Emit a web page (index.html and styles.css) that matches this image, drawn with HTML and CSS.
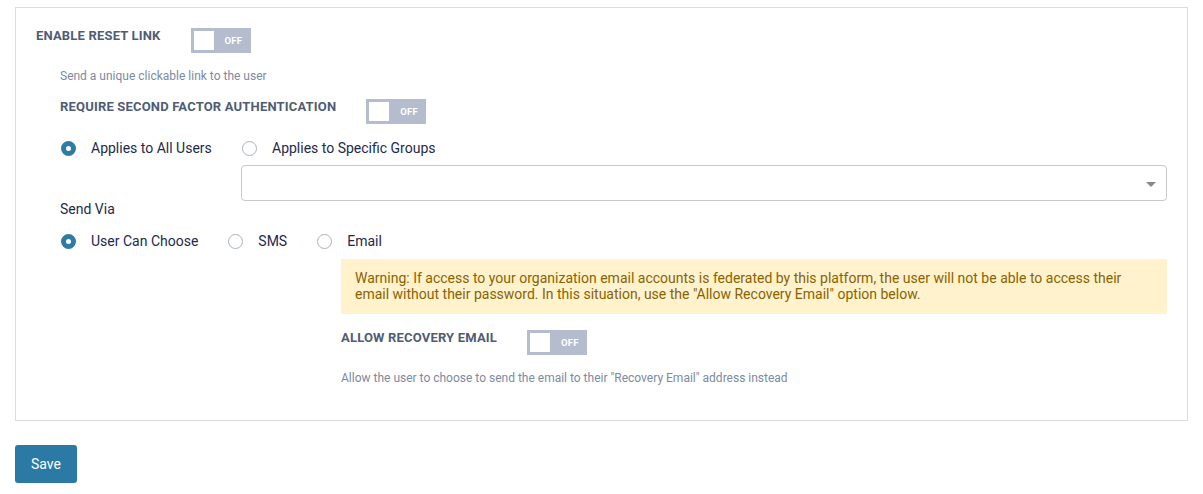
FILE: index.html
```html
<!DOCTYPE html>
<html lang="en">
<head>
<meta charset="utf-8">
<title>Reset settings</title>
<link rel="stylesheet" href="styles.css">
</head>
<body>
<div class="card">
  <div class="toggle-row">
    <span class="label">ENABLE RESET LINK</span>
    <span class="toggle"><span class="knob"></span><span class="off">OFF</span></span>
  </div>
  <div class="inner">
    <p class="desc">Send a unique clickable link to the user</p>
    <div class="toggle-row row2">
      <span class="label">REQUIRE SECOND FACTOR AUTHENTICATION</span>
      <span class="toggle"><span class="knob"></span><span class="off">OFF</span></span>
    </div>
    <div class="apply-grid">
      <label class="radio"><span class="dot on"></span>Applies to All Users</label>
      <label class="radio"><span class="dot"></span>Applies to Specific Groups</label>
      <span></span>
      <div class="select"><span class="caret"></span></div>
    </div>
    <div class="send-via">Send Via</div>
    <div class="radio-row">
      <label class="radio"><span class="dot on"></span>User Can Choose</label>
      <label class="radio"><span class="dot"></span>SMS</label>
      <label class="radio"><span class="dot"></span>Email</label>
    </div>
    <div class="email-block">
      <div class="warning">Warning: If access to your organization email accounts is federated by this platform, the user will not be able to access their email without their password. In this situation, use the "Allow Recovery Email" option below.</div>
      <div class="toggle-row row3">
        <span class="label">ALLOW RECOVERY EMAIL</span>
        <span class="toggle"><span class="knob"></span><span class="off">OFF</span></span>
      </div>
      <p class="desc">Allow the user to choose to send the email to their "Recovery Email" address instead</p>
    </div>
  </div>
</div>
<button class="save">Save</button>
</body>
</html>
```

FILE: styles.css
```css
* { box-sizing: border-box; }
body {
  margin: 0;
  padding: 7px 15px 0 15px;
  font-family: Roboto, "Liberation Sans", Arial, sans-serif;
  background: #fff;
  color: #1d2a4d;
}
.card {
  border: 1px solid #dcdcdc;
  padding: 20px 20px 34px 20px;
}
.toggle-row {
  display: flex;
  align-items: flex-start;
}
.label {
  font-size: 13px;
  font-weight: 700;
  line-height: 16px;
  letter-spacing: 0.18px;
  color: #4f5c74;
  margin-right: 30px;
}
.toggle {
  width: 60px;
  height: 25px;
  background: #b4bccd;
  display: flex;
  align-items: center;
  padding: 0 3px;
}
.knob {
  width: 20px;
  height: 19px;
  background: #fff;
}
.off {
  font-size: 9.5px;
  font-weight: 700;
  color: #fff;
  margin-left: 11px;
  letter-spacing: 0.2px;
}
.inner {
  padding-left: 24px;
}
.desc {
  margin: 15px 0 0 0;
  font-size: 12px;
  line-height: 16px;
  color: #7d8aa3;
}
.row2 {
  margin-top: 15px;
}
.apply-grid {
  margin-top: 14px;
  display: grid;
  grid-template-columns: 181px 1fr;
  row-gap: 7px;
}
.radio {
  display: flex;
  align-items: center;
  font-size: 14px;
  line-height: 20px;
  color: #1d2a4d;
}
.dot {
  width: 15px;
  height: 15px;
  border-radius: 50%;
  border: 1px solid #a9b1c2;
  margin: 0 15px 0 1px;
  flex-shrink: 0;
}
.dot.on {
  border: 5px solid #2e7ca6;
  background: #fff;
}
.select {
  height: 36px;
  border: 1px solid #c9c9c9;
  border-radius: 4px;
  position: relative;
}
.caret {
  position: absolute;
  right: 10px;
  top: 16px;
  width: 0;
  height: 0;
  border-left: 5px solid transparent;
  border-right: 5px solid transparent;
  border-top: 5px solid #8a8a8a;
}
.send-via {
  font-size: 14px;
  line-height: 16px;
  color: #1d2a4d;
}
.radio-row {
  margin-top: 14px;
  display: flex;
}
.radio-row .radio {
  margin-right: 29px;
}
.email-block {
  margin-left: 281px;
  margin-top: 8px;
}
.warning {
  background: #fff2cc;
  color: #8a6300;
  font-size: 14px;
  line-height: 16px;
  padding: 11px 14px 12px 14px;
}
.row3 {
  margin-top: 16px;
}
.save {
  margin-top: 24px;
  width: 62px;
  height: 38px;
  border: none;
  border-radius: 3px;
  background: #2b7aa5;
  color: #fff;
  font-family: Roboto, "Liberation Sans", Arial, sans-serif;
  font-size: 14px;
  padding: 0;
}
```
